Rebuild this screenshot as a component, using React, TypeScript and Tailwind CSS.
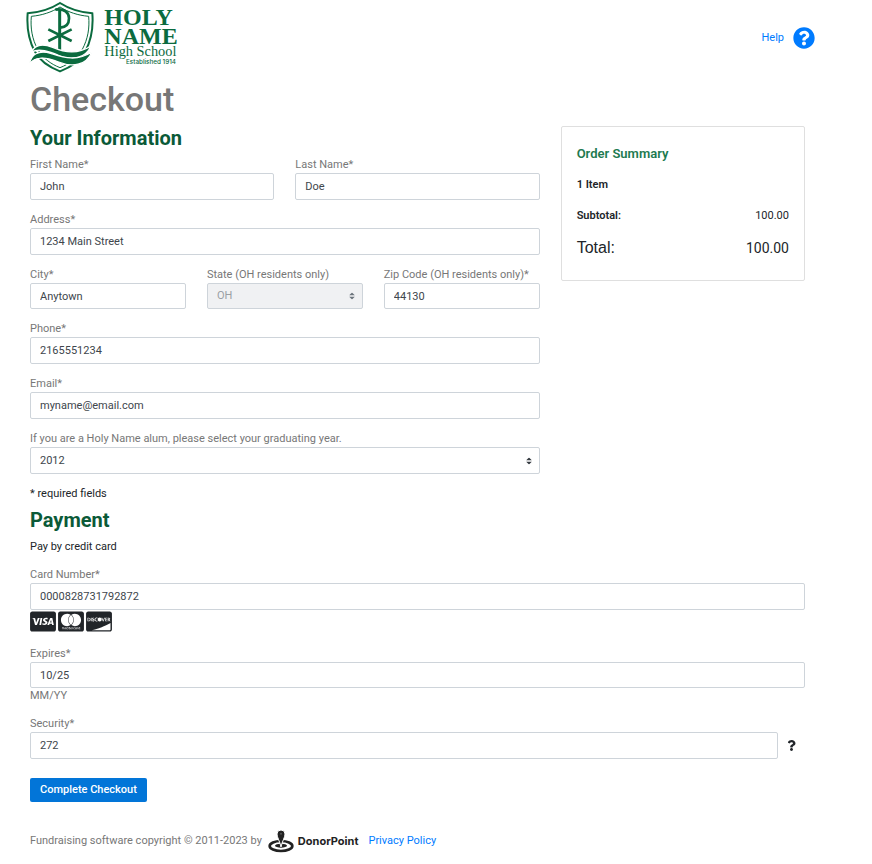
import type { InputHTMLAttributes, ReactNode, SelectHTMLAttributes } from 'react';
import { FaCcDiscover, FaCcMastercard, FaCcVisa, FaQuestion, FaQuestionCircle } from 'react-icons/fa';

const fieldClass =
  'block w-full rounded-xs border border-[#ced4da] bg-white px-[9px] font-[inherit] text-[11px] text-[#40464c] outline-none focus:border-[#80bdff]';

function Field({ id, label, children }: { id: string; label: string; children: ReactNode }) {
  return (
    <div>
      <label htmlFor={id} className="block text-[11px] leading-4 text-[#777]">
        {label}
      </label>
      {children}
    </div>
  );
}

function TextInput({ className = 'h-[27px]', ...rest }: InputHTMLAttributes<HTMLInputElement>) {
  return <input type="text" className={`${fieldClass} ${className}`} {...rest} />;
}

function Select({ className = 'h-[27px]', children, ...rest }: SelectHTMLAttributes<HTMLSelectElement>) {
  return (
    <div className="relative">
      <select
        className={`${fieldClass} appearance-none disabled:bg-[#f0f1f3] disabled:text-[#9a9fa4] disabled:opacity-100 peer ${className}`}
        {...rest}
      >
        {children}
      </select>
      <svg
        viewBox="0 0 4 5"
        className="pointer-events-none absolute top-1/2 right-2 h-[7px] w-[6px] -translate-y-1/2 fill-[#343a40] peer-disabled:fill-[#6c757d]"
      >
        <path d="M2 0L0 2h4zm0 5L0 3h4z" />
      </svg>
    </div>
  );
}

function SchoolLogo() {
  return (
    <svg viewBox="18 0 459 225" className="h-[75px] w-[153px]" role="img" aria-label="Holy Name High School">
      <g fill="none" stroke="#0b6b3f">
        <path
          d="M120 9C92 27 60 37 23 40C20 78 25 118 44 154C59 182 88 202 120 214C152 202 181 182 196 154C215 118 220 78 217 40C180 37 148 27 120 9Z"
          strokeWidth="6"
        />
        <path
          d="M120 21C94 37 66 46 34 49C31 84 36 116 53 148C68 174 92 192 120 203C148 192 172 174 187 148C204 116 209 84 206 49C174 46 146 37 120 21Z"
          strokeWidth="3"
        />
        <path d="M119 30V150" strokeWidth="9" />
        <path d="M106 29C134 25 147 38 147 55C147 73 136 82 121 83" strokeWidth="8" />
        <path d="M85 88L155 123M155 88L85 123" strokeWidth="8" />
      </g>
      {/* waves */}
      <g fill="#0b6b3f" stroke="#fff" strokeWidth="4">
        <path d="M34 156C46 132 72 132 98 142C136 158 172 164 213 138C198 172 160 184 120 168C86 154 58 144 34 156Z" />
        <path d="M28 192C34 164 54 149 92 160C130 172 168 186 216 156C198 198 156 202 116 186C80 171 48 166 28 192Z" />
      </g>
      <g fill="#0b6b3f">
        <g fontFamily="'Liberation Serif', serif">
          <text x="253" y="76" fontSize="72" fontWeight="700">HOLY</text>
          <text x="253" y="132" fontSize="72" fontWeight="700">NAME</text>
          <text x="253" y="169" fontSize="43">High School</text>
        </g>
        <text x="468" y="193" fontSize="19" textAnchor="end" fontFamily="Inter, sans-serif" fontWeight="500">
          Established 1914
        </text>
      </g>
    </svg>
  );
}

function DonorPointLogo() {
  return (
    <svg viewBox="0 0 78 72" className="h-6 w-[26px]" aria-hidden="true">
      <ellipse cx="39" cy="51" rx="34" ry="15" fill="none" stroke="#222" strokeWidth="8" />
      <ellipse cx="39" cy="50" rx="18" ry="6" fill="#222" />
      <path d="M39 54C36 37 27 26 27 15a12 12 0 0 1 24 0C51 26 42 37 39 54Z" fill="#222" stroke="#fff" strokeWidth="3" />
      <circle cx="39" cy="14" r="3" fill="#555" />
    </svg>
  );
}

export default function App() {
  return (
    <div className="bg-white pb-3 font-[Roboto,sans-serif] text-[11px] leading-4 text-[#212529]">
      <header className="flex items-center justify-between pr-[57px] pl-[26px]">
        <SchoolLogo />
        <a href="#help" className="flex items-center gap-[9px] text-[#007bff]">
          Help
          <FaQuestionCircle className="size-[22px]" />
        </a>
      </header>

      <main className="pr-[67px] pl-[30px]">
        <h1 className="pt-1 text-[34px] leading-10 font-medium text-[#777]">Checkout</h1>

        <form onSubmit={(e) => e.preventDefault()}>
          <div className="grid grid-cols-3 items-start gap-[21px] pt-[7px]">
            <section className="col-span-2 grid gap-3">
              <div>
                <h2 className="pb-[7px] text-[20px] leading-6 font-bold text-[#0b5a38]">Your Information</h2>
                <div className="grid grid-cols-2 gap-[21px]">
                  <Field id="first" label="First Name*">
                    <TextInput id="first" defaultValue="John" />
                  </Field>
                  <Field id="last" label="Last Name*">
                    <TextInput id="last" defaultValue="Doe" />
                  </Field>
                </div>
              </div>
              <Field id="address" label="Address*">
                <TextInput id="address" defaultValue="1234 Main Street" />
              </Field>
              <div className="grid grid-cols-3 gap-[21px]">
                <Field id="city" label="City*">
                  <TextInput id="city" defaultValue="Anytown" className="h-[26px]" />
                </Field>
                <Field id="state" label="State (OH residents only)">
                  <Select id="state" defaultValue="OH" className="h-[26px]" disabled>
                    <option>OH</option>
                  </Select>
                </Field>
                <Field id="zip" label="Zip Code (OH residents only)*">
                  <TextInput id="zip" defaultValue="44130" className="h-[26px]" />
                </Field>
              </div>
              <Field id="phone" label="Phone*">
                <TextInput id="phone" type="tel" defaultValue="2165551234" />
              </Field>
              <Field id="email" label="Email*">
                <TextInput id="email" type="email" defaultValue="myname@email.com" />
              </Field>
              <Field id="year" label="If you are a Holy Name alum, please select your graduating year.">
                <Select id="year" defaultValue="2012">
                  <option>2011</option>
                  <option>2012</option>
                  <option>2013</option>
                </Select>
              </Field>
              <p>* required fields</p>
            </section>

            <aside className="rounded-xs border border-[#dfdfdf] px-[15px] pt-[18px] pb-5">
              <h2 className="text-[13px] leading-[18px] font-semibold text-[#1d7a50]">Order Summary</h2>
              <p className="pt-[14px] font-semibold">1 Item</p>
              <dl>
                <div className="flex items-center justify-between pt-[15px]">
                  <dt className="font-semibold">Subtotal:</dt>
                  <dd>100.00</dd>
                </div>
                <div className="flex items-center justify-between pt-3">
                  <dt className="font-['Liberation_Sans',sans-serif] text-[16px] leading-6">Total:</dt>
                  <dd className="text-[14px] leading-6">100.00</dd>
                </div>
              </dl>
            </aside>
          </div>

          <section>
            <h2 className="pt-[6px] text-[20px] leading-6 font-bold text-[#0b5a38]">Payment</h2>
            <p className="pt-[7px] pb-3">Pay by credit card</p>

            <div className="grid gap-3">
              <div>
                <Field id="card" label="Card Number*">
                  <TextInput id="card" inputMode="numeric" defaultValue="0000828731792872" />
                </Field>
                <div className="flex gap-[2px] pb-px">
                  <FaCcVisa className="h-[23px] w-[26px]" />
                  <FaCcMastercard className="h-[23px] w-[26px]" />
                  <FaCcDiscover className="h-[23px] w-[26px]" />
                </div>
              </div>
              <div>
                <Field id="expires" label="Expires*">
                  <TextInput id="expires" defaultValue="10/25" aria-describedby="expires-hint" className="h-[26px]" />
                </Field>
                <p id="expires-hint" className="text-[#777]">MM/YY</p>
              </div>
              <div>
                <label htmlFor="security" className="block text-[#777]">Security*</label>
                <div className="flex items-center gap-2">
                  <TextInput id="security" defaultValue="272" />
                  <button type="button" aria-label="What is the security code?" className="flex w-[19px] shrink-0">
                    <FaQuestion className="size-[11px]" />
                  </button>
                </div>
              </div>
            </div>

            <button
              type="submit"
              className="mt-[19px] block h-6 rounded-xs bg-[#0275d8] px-[10px] font-medium text-white hover:bg-[#025aa5]"
            >
              Complete Checkout
            </button>
          </section>
        </form>
      </main>

      <footer className="flex items-center pt-[27px] pl-[30px] text-[#777]">
        <span className="pr-[6px]">Fundraising software copyright © 2011-2023 by</span>
        <a href="#donorpoint" className="flex items-center gap-1 font-[Inter,sans-serif] font-bold text-[#222]">
          <DonorPointLogo />
          DonorPoint
        </a>
        <a href="#privacy" className="pl-[10px] text-[#007bff]">Privacy Policy</a>
      </footer>
    </div>
  );
}
